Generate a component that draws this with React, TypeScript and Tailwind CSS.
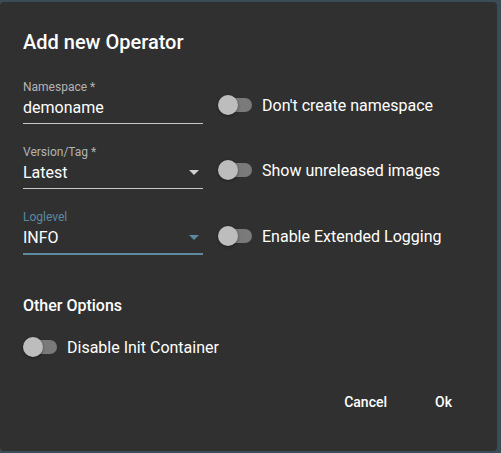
import React from "react";

function Switch() {
  return (
    <div className="relative w-[34px] h-[20px] shrink-0">
      <div className="absolute left-[3px] top-[3px] w-[31px] h-[14px] rounded-full bg-[#7a7a7a]" />
      <div className="absolute left-0 top-0 w-[20px] h-[20px] rounded-full bg-[#bdbdbd] shadow-[0_1px_3px_rgba(0,0,0,0.4)]" />
    </div>
  );
}

function Caret({ color }: { color: string }) {
  return (
    <svg width="10" height="5" viewBox="0 0 10 5" className="shrink-0">
      <path d="M0 0 L10 0 L5 5 Z" fill={color} />
    </svg>
  );
}

function Field({
  label,
  value,
  select,
  focused,
}: {
  label: string;
  value: string;
  select?: boolean;
  focused?: boolean;
}) {
  return (
    <div className="w-[180px] shrink-0">
      <div
        className={
          "text-[12px] leading-[14px] " +
          (focused ? "text-[#5b8aa0]" : "text-[#b3b3b3]")
        }
      >
        {label}
      </div>
      <div
        className={
          "flex items-center justify-between mt-[4px] pb-[6px] " +
          (focused ? "border-b-2 border-[#5b8aa0]" : "border-b border-[#c8c8c8]")
        }
      >
        <span className="text-[16px] leading-[19px] text-white">{value}</span>
        {select && (
          <span className="mr-[4px]">
            <Caret color={focused ? "#5b8aa0" : "#d0d0d0"} />
          </span>
        )}
      </div>
    </div>
  );
}

function Row({
  label,
  value,
  select,
  focused,
  toggle,
}: {
  label: string;
  value: string;
  select?: boolean;
  focused?: boolean;
  toggle: string;
}) {
  return (
    <div className="flex items-end">
      <Field label={label} value={value} select={select} focused={focused} />
      <div className="flex items-center ml-[15px] mb-[9px]">
        <Switch />
        <span className="ml-[10px] text-[16px] leading-[19px] text-white">{toggle}</span>
      </div>
    </div>
  );
}

export default function App() {
  return (
    <div
      className="w-[501px] h-[453px] bg-[#3a4c56] pt-[2px] overflow-hidden"
      style={{ fontFamily: "Roboto, 'Noto Sans', sans-serif" }}
    >
      <div className="w-[497px] h-[449px] bg-[#303030] rounded-[4px] flex flex-col px-[23px]">
        <div className="mt-[28px] text-[20px] leading-[24px] font-medium text-white">
          Add new Operator
        </div>
        <div className="mt-[26px] flex flex-col gap-[21px]">
          <Row label="Namespace *" value="demoname" toggle="Don't create namespace" />
          <Row label="Version/Tag *" value="Latest" select toggle="Show unreleased images" />
          <Row label="Loglevel" value="INFO" select focused toggle="Enable Extended Logging" />
        </div>
        <div className="mt-[41px] text-[16px] leading-[19px] font-medium text-white">
          Other Options
        </div>
        <div className="mt-[22px] flex items-center">
          <Switch />
          <span className="ml-[10px] text-[16px] leading-[19px] text-white">
            Disable Init Container
          </span>
        </div>
        <div className="mt-[37px] flex justify-end">
          <span className="text-[14px] leading-[16px] font-medium text-white mr-[48px]">Cancel</span>
          <span className="text-[14px] leading-[16px] font-medium text-white mr-[22px]">Ok</span>
        </div>
      </div>
    </div>
  );
}
